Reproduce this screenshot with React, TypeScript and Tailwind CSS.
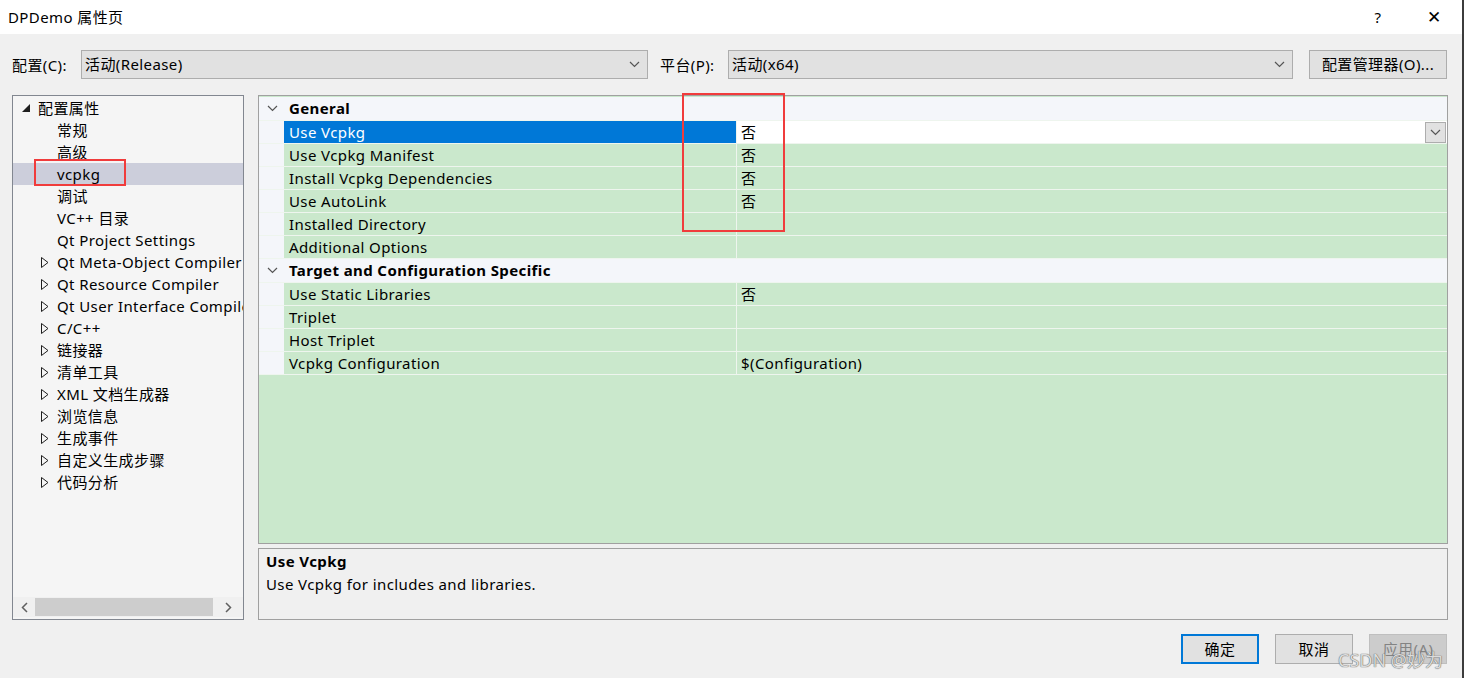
const font = { fontFamily: '"Noto Sans", "Noto Sans CJK SC", sans-serif' };

type TreeItem = { label: string; expandable?: boolean; selected?: boolean };

const treeItems: TreeItem[] = [
  { label: '常规' },
  { label: '高级' },
  { label: 'vcpkg', selected: true },
  { label: '调试' },
  { label: 'VC++ 目录' },
  { label: 'Qt Project Settings' },
  { label: 'Qt Meta-Object Compiler', expandable: true },
  { label: 'Qt Resource Compiler', expandable: true },
  { label: 'Qt User Interface Compiler', expandable: true },
  { label: 'C/C++', expandable: true },
  { label: '链接器', expandable: true },
  { label: '清单工具', expandable: true },
  { label: 'XML 文档生成器', expandable: true },
  { label: '浏览信息', expandable: true },
  { label: '生成事件', expandable: true },
  { label: '自定义生成步骤', expandable: true },
  { label: '代码分析', expandable: true },
];

type Prop = { name: string; value?: string; selected?: boolean };

const general: Prop[] = [
  { name: 'Use Vcpkg', value: '否', selected: true },
  { name: 'Use Vcpkg Manifest', value: '否' },
  { name: 'Install Vcpkg Dependencies', value: '否' },
  { name: 'Use AutoLink', value: '否' },
  { name: 'Installed Directory' },
  { name: 'Additional Options' },
];

const target: Prop[] = [
  { name: 'Use Static Libraries', value: '否' },
  { name: 'Triplet' },
  { name: 'Host Triplet' },
  { name: 'Vcpkg Configuration', value: '$(Configuration)' },
];

function Chevron({ className = '' }: { className?: string }) {
  return (
    <svg className={className} width="11" height="7" viewBox="0 0 11 7" fill="none">
      <path d="M1 1l4.5 4.5L10 1" stroke="#555" strokeWidth="1.2" />
    </svg>
  );
}

function Dropdown({ text, width }: { text: string; width: string }) {
  return (
    <div className={`${width} h-[29px] flex items-center justify-between bg-[#e1e1e1] border border-[#adadad] pl-[3px] pr-[7px]`}>
      <span>{text}</span>
      <Chevron />
    </div>
  );
}

function PropRow({ p }: { p: Prop }) {
  return (
    <div className="flex h-[23px] border-b border-[#eef5ee]">
      <div className="w-[25px] shrink-0 bg-[#f4f6fa]" />
      <div
        className={`w-[453px] shrink-0 flex items-center pl-[5px] border-r border-[#eef5ee] ${
          p.selected ? 'bg-[#0078d7] text-white' : 'bg-[#cae8cc] text-black'
        }`}
      >
        {p.name}
      </div>
      {p.selected ? (
        <div className="flex-1 flex items-center bg-white pl-[4px] justify-between">
          <span>{p.value}</span>
          <div className="w-[21px] h-[21px] mr-[1px] bg-[#e1e1e1] border border-[#adadad] flex items-center justify-center">
            <Chevron />
          </div>
        </div>
      ) : (
        <div className="flex-1 flex items-center bg-[#cae8cc] pl-[4px]">{p.value}</div>
      )}
    </div>
  );
}

function Category({ title, props }: { title: string; props: Prop[] }) {
  return (
    <div>
      <div className="flex h-[24px] items-center bg-[#f4f6fa] border-b border-[#eef5ee]">
        <div className="w-[26px] flex justify-center">
          <Chevron />
        </div>
        <span className="font-bold pl-[4px]">{title}</span>
      </div>
      {props.map((p) => (
        <PropRow key={p.name} p={p} />
      ))}
    </div>
  );
}

function Button({ label, variant = 'normal' }: { label: string; variant?: 'primary' | 'normal' | 'disabled' }) {
  const styles = {
    primary: 'border-2 border-[#0078d7] bg-[#e1e1e1] text-black',
    normal: 'border border-[#adadad] bg-[#e1e1e1] text-black',
    disabled: 'border border-[#bfbfbf] bg-[#cccccc] text-[#838383]',
  }[variant];
  return <div className={`w-[78px] h-[30px] flex items-center justify-center ${styles}`}>{label}</div>;
}

export default function App() {
  return (
    <div
      className="relative w-[1464px] h-[678px] bg-[#f0f0f0] overflow-hidden text-[15px] tracking-[0.4px] text-black border-r-2 border-[#3c3c3c]"
      style={font}
    >
      {/* Title bar */}
      <div className="h-[34px] bg-white flex items-center justify-between pl-[8px]">
        <span>DPDemo 属性页</span>
        <div className="flex items-center">
          <span className="w-[56px] text-center">?</span>
          <span className="w-[56px] text-center text-[17px]">✕</span>
        </div>
      </div>

      {/* Configuration row */}
      <div className="flex items-center pl-[12px] pt-[16px]">
        <span className="w-[69px] pt-[2px]">配置(C):</span>
        <Dropdown text="活动(Release)" width="w-[567px]" />
        <span className="w-[68px] ml-[12px] pt-[2px]">平台(P):</span>
        <Dropdown text="活动(x64)" width="w-[565px]" />
        <div className="ml-[16px] w-[138px] h-[29px] flex items-center justify-center bg-[#e1e1e1] border border-[#adadad]">
          配置管理器(O)...
        </div>
      </div>

      {/* Main */}
      <div className="flex pl-[12px] pt-[16px] gap-[14px]">
        {/* Tree */}
        <div className="w-[232px] h-[525px] bg-[#f5f5f5] border border-[#828790] flex flex-col">
          <div className="flex-1 overflow-hidden pt-[1px]">
            <div className="relative flex h-[22px] items-center whitespace-nowrap">
              <svg className="ml-[9px] mr-[8px]" width="8" height="8" viewBox="0 0 8 8">
                <path d="M8 0V8H0Z" fill="#1e1e1e" />
              </svg>
              <span>配置属性</span>
            </div>
            {treeItems.map((t) => (
              <div
                key={t.label}
                className={`relative flex h-[22px] items-center whitespace-nowrap ${t.selected ? 'bg-[#cccedb]' : ''}`}
              >
                <div className="w-[44px] shrink-0 flex justify-end pr-[8px]">
                  {t.expandable && (
                    <svg width="8" height="11" viewBox="0 0 8 11">
                      <path d="M0.5 0.5L7 5.5L0.5 10.5Z" fill="none" stroke="#1e1e1e" />
                    </svg>
                  )}
                </div>
                <span>{t.label}</span>
                {t.selected && (
                  <div className="absolute left-[21px] top-[-4px] w-[92px] h-[27px] border-2 border-[#f03c3c]" />
                )}
              </div>
            ))}
          </div>
          {/* Horizontal scrollbar */}
          <div className="h-[20px] flex items-center bg-[#f0f0f0] mb-[2px]">
            <div className="w-[22px] flex justify-center">
              <svg width="7" height="11" viewBox="0 0 7 11">
                <path d="M6 1L1.5 5.5L6 10" fill="none" stroke="#606060" strokeWidth="1.5" />
              </svg>
            </div>
            <div className="w-[178px] h-[18px] bg-[#cdcdcd]" />
            <div className="flex-1 flex justify-center">
              <svg width="7" height="11" viewBox="0 0 7 11">
                <path d="M1 1L5.5 5.5L1 10" fill="none" stroke="#606060" strokeWidth="1.5" />
              </svg>
            </div>
          </div>
        </div>

        {/* Property grid and description */}
        <div className="w-[1190px] flex flex-col gap-[4px]">
          <div className="relative h-[449px] bg-[#cae8cc] border border-[#a0a0a0] pt-[1px]">
            <Category title="General" props={general} />
            <Category title="Target and Configuration Specific" props={target} />
            <div className="absolute left-[423px] top-[-3px] w-[103px] h-[139px] border-2 border-[#f03c3c]" />
          </div>
          <div className="h-[72px] bg-[#f0f0f0] border border-[#a0a0a0] px-[7px] pt-[1px]">
            <div className="font-bold leading-[23px]">Use Vcpkg</div>
            <div className="leading-[23px]">Use Vcpkg for includes and libraries.</div>
          </div>
        </div>
      </div>

      {/* Buttons */}
      <div className="flex justify-end gap-[16px] pr-[15px] pt-[14px]">
        <Button label="确定" variant="primary" />
        <Button label="取消" />
        <Button label="应用(A)" variant="disabled" />
      </div>

      {/* Watermark */}
      <div className="absolute left-[1338px] top-[647px] text-[18px] tracking-normal text-[#dcdcdc] [text-shadow:0_0_1px_#666,0_0_1px_#666]">
        CSDN @妙为
      </div>
    </div>
  );
}
